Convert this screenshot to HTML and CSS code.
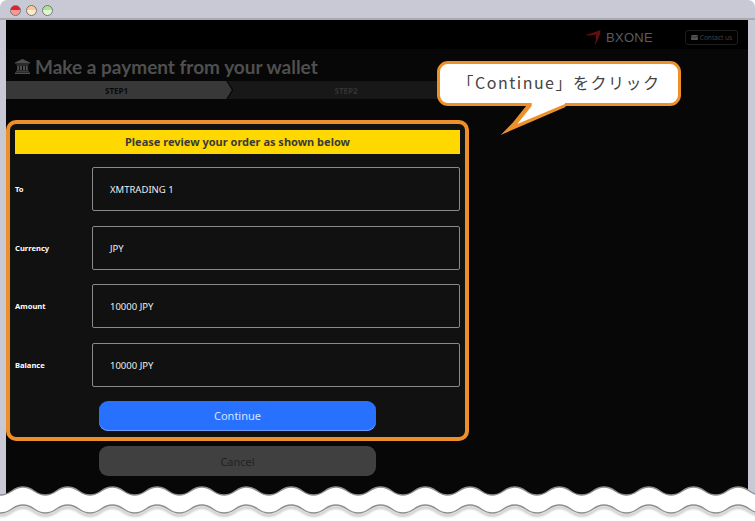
FILE: index.html
```html
<!DOCTYPE html>
<html lang="en">
<head>
    <meta charset="UTF-8">
    <meta name="viewport" content="width=device-width, initial-scale=1.0">
    <title>Make a payment from your wallet</title>
    <link rel="stylesheet" href="styles.css">
</head>
<body>
    <div class="window">
        <div class="titlebar">
            <span class="light light-red"></span>
            <span class="light light-yellow"></span>
            <span class="light light-green"></span>
        </div>

        <div class="screen">
            <header class="topbar">
                <div class="logo">
                    <svg width="16" height="16" viewBox="0 0 16 16">
                        <path d="M0 5 Q8 3 15.5 0 Q15 8 9.5 15.5 Q11.5 9 11 4.5 Q6 6 0 5 Z" fill="#5e0f12"/>
                    </svg>
                    <span class="logo-text">BXONE</span>
                </div>
                <div class="contact">
                    <svg width="7" height="5" viewBox="0 0 8 6">
                        <path d="M0 0 H8 V6 H0 Z" fill="#555"/>
                        <path d="M0 .8 L4 3.4 L8 .8" fill="none" stroke="#111" stroke-width=".7"/>
                    </svg>
                    Contact us
                </div>
            </header>

            <h1 class="page-title">
                <svg width="15" height="15" viewBox="0 0 15 15">
                    <path d="M7.5 0 L15 3.4 V4.6 H0 V3.4 Z M1.5 5.4 H13.5 V6.4 H1.5 Z M2.2 7 H4.2 V11 H2.2 Z M5 7 H7 V11 H5 Z M8 7 H10 V11 H8 Z M10.8 7 H12.8 V11 H10.8 Z M1.2 11.6 H13.8 V12.8 H1.2 Z M0 13.4 H15 V15 H0 Z" fill="#4f4f4f"/>
                </svg>
                Make a payment from your wallet
            </h1>

            <div class="steps">
                <div class="step step-on">STEP1</div>
                <svg class="step-edge" width="8" height="18" viewBox="0 0 8 18">
                    <path d="M1 0 L6.5 9 L1 18" fill="none" stroke="#050505" stroke-width="1.2"/>
                </svg>
                <div class="step">STEP2</div>
            </div>

            <section class="review">
                <div class="notice">Please review your order as shown below</div>
                <div class="row">
                    <label class="row-label">To</label>
                    <div class="row-value">XMTRADING 1</div>
                </div>
                <div class="row">
                    <label class="row-label">Currency</label>
                    <div class="row-value">JPY</div>
                </div>
                <div class="row">
                    <label class="row-label">Amount</label>
                    <div class="row-value">10000 JPY</div>
                </div>
                <div class="row">
                    <label class="row-label">Balance</label>
                    <div class="row-value">10000 JPY</div>
                </div>
                <button class="btn btn-blue">Continue</button>
            </section>

            <button class="btn btn-grey">Cancel</button>
        </div>

        <!-- speech bubble over the page -->
        <div class="bubble">
            <svg class="bubble-tail" width="72" height="38" viewBox="0 0 72 38">
                <path d="M28.7 5.3 L14.7 22.7 L2.7 35 L67 7.3 L68.7 5.3 Z" fill="#ee9029"/>
                <path d="M33.7 1.7 V6 L19.3 24 L67 4 V1.7 Z" fill="#fff"/>
            </svg>
            「Continue」をクリック
        </div>

        <!-- torn edge at the bottom of the picture -->
        <svg class="torn" width="755" height="36" viewBox="0 0 755 36">
            <defs>
                <filter id="blur"><feGaussianBlur stdDeviation="1.2"/></filter>
                <path id="wave" d="M-21.7 0 c11 0 11.35 8 22.35 8 s11.35 -8 22.35 -8 s11.35 8 22.35 8 s11.35 -8 22.35 -8 s11.35 8 22.35 8 s11.35 -8 22.35 -8 s11.35 8 22.35 8 s11.35 -8 22.35 -8 s11.35 8 22.35 8 s11.35 -8 22.35 -8 s11.35 8 22.35 8 s11.35 -8 22.35 -8 s11.35 8 22.35 8 s11.35 -8 22.35 -8 s11.35 8 22.35 8 s11.35 -8 22.35 -8 s11.35 8 22.35 8 s11.35 -8 22.35 -8 s11.35 8 22.35 8 s11.35 -8 22.35 -8 s11.35 8 22.35 8 s11.35 -8 22.35 -8 s11.35 8 22.35 8 s11.35 -8 22.35 -8 s11.35 8 22.35 8 s11.35 -8 22.35 -8 s11.35 8 22.35 8 s11.35 -8 22.35 -8 s11.35 8 22.35 8 s11.35 -8 22.35 -8 s11.35 8 22.35 8 s11.35 -8 22.35 -8 s11.35 8 22.35 8 s11.35 -8 22.35 -8 s11.35 8 22.35 8 s11.35 -8 22.35 -8 V80 H-21.7 Z"/>
            </defs>
            <use href="#wave" class="wave-fill" y="2"/>
            <use href="#wave" class="wave-shadow" y="22.5" filter="url(#blur)"/>
            <use href="#wave" class="wave-line" y="20"/>
        </svg>
    </div>
</body>
</html>
```

FILE: styles.css
```css
* {
    box-sizing: border-box;
}

html, body {
    height: 100%;
}

body {
    margin: 0;
    background: #fff;
    font-family: 'Noto Sans', sans-serif;
    overflow: hidden;
}

.window {
    position: relative;
    width: 755px;
    height: 521px;
    overflow: hidden;
    background: #c9c9d6;
    border-radius: 7px 7px 0 0;
    padding: 0 7px 0 6px;
}

.titlebar {
    display: flex;
    align-items: center;
    gap: 5px;
    height: 20px;
    margin: 0 -7px 0 -6px;
    padding: 2px 0 0 10px;
    border-bottom: 2px solid #a9a9ae;
}

.light {
    width: 11px;
    height: 11px;
    border-radius: 50%;
    border: 1px solid #777;
}

.light-red {
    background: linear-gradient(#ee1a26 50%, #f99a96 50%);
}

.light-yellow {
    background: linear-gradient(#fbc98c 50%, #fde9cd 50%);
}

.light-green {
    background: linear-gradient(#a6e592 50%, #dff6d5 50%);
}

.screen {
    height: 501px;
    background: #070707;
}

.topbar {
    display: flex;
    justify-content: flex-end;
    align-items: center;
    height: 29px;
    background: #000;
    padding: 6px 10px 0 0;
}

.logo {
    display: flex;
    align-items: center;
    gap: 5px;
    margin-right: 32px;
}

.logo-text {
    font-family: 'Liberation Sans', sans-serif;
    font-size: 13px;
    letter-spacing: 0.3px;
    color: #5a5d60;
}

.contact {
    display: flex;
    align-items: center;
    justify-content: center;
    gap: 2px;
    width: 53px;
    height: 15px;
    font-size: 6.5px;
    color: #444;
    border: 1px solid #1e1e1e;
    border-radius: 3px;
}

.page-title {
    display: flex;
    align-items: center;
    gap: 5px;
    height: 32px;
    margin: 0;
    padding: 2px 0 0 9px;
    font-family: 'Lato', sans-serif;
    font-size: 19px;
    font-weight: 700;
    color: #4f4f4f;
}

.steps {
    position: relative;
    display: flex;
    width: 440px;
    height: 18px;
    background: #181818;
    font-size: 8px;
    font-weight: 700;
}

.step {
    flex: 0 0 226px;
    display: flex;
    align-items: center;
    justify-content: center;
    color: #333;
}

.step-on {
    flex: 0 0 227px;
    padding-right: 6px;
    color: #0a0a0a;
    background: #383838;
    clip-path: polygon(0 0, 221px 0, 226.5px 50%, 221px 100%, 0 100%);
}

.step-edge {
    position: absolute;
    left: 220px;
    top: 0;
}

.review {
    width: 463px;
    height: 321px;
    margin-top: 21px;
    padding: 6px 5px 0;
    background: #111;
    border: 4px solid #ee9029;
    border-radius: 10px;
}

.notice {
    height: 24px;
    line-height: 24px;
    text-align: center;
    font-size: 11px;
    font-weight: 700;
    color: #3a3a3a;
    background: #ffd800;
    margin-bottom: 13px;
}

.row {
    display: flex;
    align-items: center;
    height: 44px;
    margin-bottom: 14.5px;
}

.row-label {
    flex: 0 0 77px;
    font-size: 7.6px;
    font-weight: 700;
    color: #fff;
}

.row-value {
    flex: 1;
    height: 44px;
    line-height: 44px;
    padding-left: 17px;
    font-size: 9.5px;
    color: #eee;
    border: 1px solid #8a8a8a;
    border-radius: 2px;
}

.btn {
    display: block;
    width: 277px;
    height: 30px;
    padding: 0;
    font-family: inherit;
    font-size: 11px;
    border: none;
    border-radius: 9px;
}

.btn-blue {
    margin: -0.5px 0 0 84px;
    color: #d5e3ff;
    background: #2871ff;
    box-shadow: inset 0 -1px 0 #6b9dff;
}

.btn-grey {
    margin: 5px 0 0 93px;
    color: #222;
    background: #404040;
}

.bubble {
    position: absolute;
    left: 437px;
    top: 61px;
    width: 244px;
    height: 45px;
    padding-top: 7px;
    text-align: center;
    font-family: 'Noto Sans CJK JP', 'Noto Sans', sans-serif;
    font-size: 16px;
    letter-spacing: 1.5px;
    line-height: 22px;
    color: #444;
    background: #fff;
    border: 3px solid #ee9029;
    border-radius: 11px;
}

.bubble-tail {
    position: absolute;
    left: 58px;
    top: 36px;
}

.torn {
    position: absolute;
    left: 0;
    bottom: 0;
}

.wave-fill {
    fill: #fff;
    stroke: #8e8e8e;
    stroke-width: 1.5;
}

.wave-shadow {
    fill: none;
    stroke: #c4c4c4;
    stroke-width: 2.5;
}

.wave-line {
    fill: none;
    stroke: #8e8e8e;
    stroke-width: 1.5;
}
```
